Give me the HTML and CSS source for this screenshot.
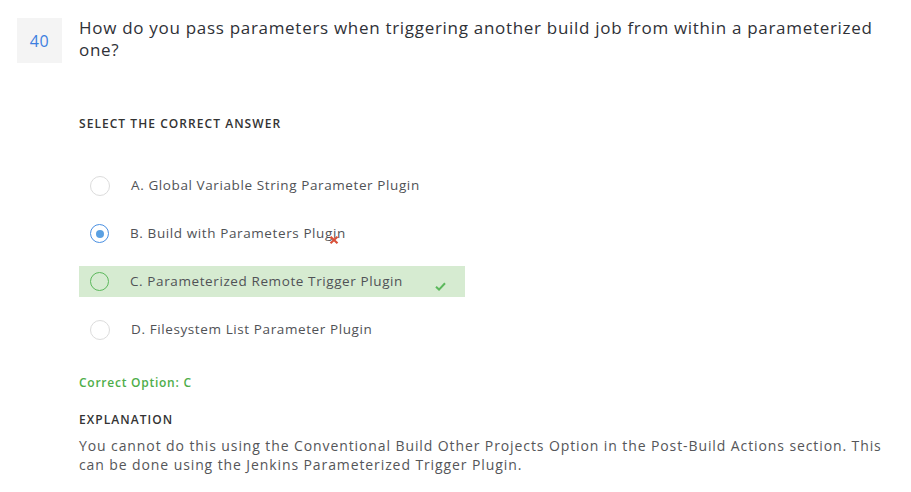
FILE: index.html
```html
<!DOCTYPE html>
<html>
<head>
<meta charset="utf-8">
<link rel="stylesheet" href="styles.css">
</head>
<body>
<div class="page">
  <div class="question">
    <div class="qnum">40</div>
    <div class="qtext">How do you pass parameters when triggering another build job from within a parameterized one?</div>
  </div>
  <div class="body">
    <div class="label select-label">SELECT THE CORRECT ANSWER</div>
    <ul class="options">
      <li class="option"><span class="radio"></span><span class="otext">A. Global Variable String Parameter Plugin</span></li>
      <li class="option"><span class="radio checked"></span><span class="otext">B. Build with Parameters Plugin</span>
        <svg class="mark wrong" width="10" height="8" viewBox="0 0 10 8"><path d="M1.5 0.8 L8.5 7.2 M8.5 0.8 L1.5 7.2" stroke="#d8513a" stroke-width="2.2" fill="none"/></svg>
      </li>
      <li class="option correct"><span class="radio"></span><span class="otext">C. Parameterized Remote Trigger Plugin</span>
        <svg class="mark right" width="11" height="9" viewBox="0 0 11 9"><path d="M1 4.8 L4 7.6 L10 1.2" stroke="#5cb85c" stroke-width="2" fill="none"/></svg>
      </li>
      <li class="option"><span class="radio"></span><span class="otext">D. Filesystem List Parameter Plugin</span></li>
    </ul>
    <div class="correct-option">Correct Option: C</div>
    <div class="label expl-label">EXPLANATION</div>
    <p class="explanation">You cannot do this using the Conventional Build Other Projects Option in the Post-Build Actions section. This can be done using the Jenkins Parameterized Trigger Plugin.</p>
  </div>
</div>
</body>
</html>
```
FILE: styles.css
```css
html, body {
  margin: 0;
  padding: 0;
  background: #ffffff;
}
body {
  font-family: "Open Sans", "Liberation Sans", sans-serif;
}
.page {
  padding: 17px 0 0 17px;
}
.question {
  display: flex;
  align-items: flex-start;
  gap: 17px;
}
.qnum {
  flex: 0 0 45px;
  width: 45px;
  height: 45px;
  margin-top: 1px;
  background: #f4f4f4;
  color: #3d7fe0;
  font-size: 16px;
  letter-spacing: 0.5px;
  display: flex;
  align-items: center;
  justify-content: center;
}
.qtext {
  width: 805px;
  font-size: 17px;
  line-height: 22px;
  letter-spacing: 0.7px;
  color: #2f3137;
}
.body {
  padding-left: 62px;
}
.label {
  font-size: 12px;
  line-height: 16px;
  font-weight: 600;
  color: #333333;
  letter-spacing: 1.05px;
}
.select-label {
  margin-top: 53px;
}
.options {
  list-style: none;
  margin: 38px 0 0 0;
  padding: 0;
  display: flex;
  flex-direction: column;
  gap: 17px;
}
.option {
  position: relative;
  width: 386px;
  height: 31px;
  display: flex;
  align-items: center;
  padding-left: 11px;
  box-sizing: border-box;
}
.option.correct {
  background: #d6ebd1;
}
.radio {
  width: 18px;
  height: 18px;
  border-radius: 50%;
  border: 1px solid #dcdcdc;
  background: #fff;
  flex: 0 0 auto;
  box-sizing: content-box;
  position: relative;
}
.radio.checked {
  border: 1.5px solid #4a90e2;
  width: 17px;
  height: 17px;
}
.radio.checked::after {
  content: "";
  position: absolute;
  left: 4.5px;
  top: 4.5px;
  width: 8px;
  height: 8px;
  border-radius: 50%;
  background: #5aa0e2;
}
.option.correct .radio {
  border: 1.5px solid #5cb85c;
  background: transparent;
  width: 17px;
  height: 17px;
}
.otext {
  margin-left: 21px;
  font-size: 13.5px;
  letter-spacing: 0.6px;
  color: #505256;
  margin-top: -2px;
}
.mark {
  position: absolute;
}
.mark.wrong {
  left: 250px;
  top: 18px;
}
.mark.right {
  left: 356px;
  top: 16px;
}
.correct-option {
  margin-top: 30px;
  font-size: 12px;
  line-height: 16px;
  font-weight: 600;
  letter-spacing: 0.75px;
  color: #4eae4a;
}
.expl-label {
  margin-top: 21px;
}
.explanation {
  margin: 8px 0 0 0;
  width: 815px;
  font-size: 14px;
  line-height: 19px;
  letter-spacing: 0.9px;
  color: #555659;
}
```
